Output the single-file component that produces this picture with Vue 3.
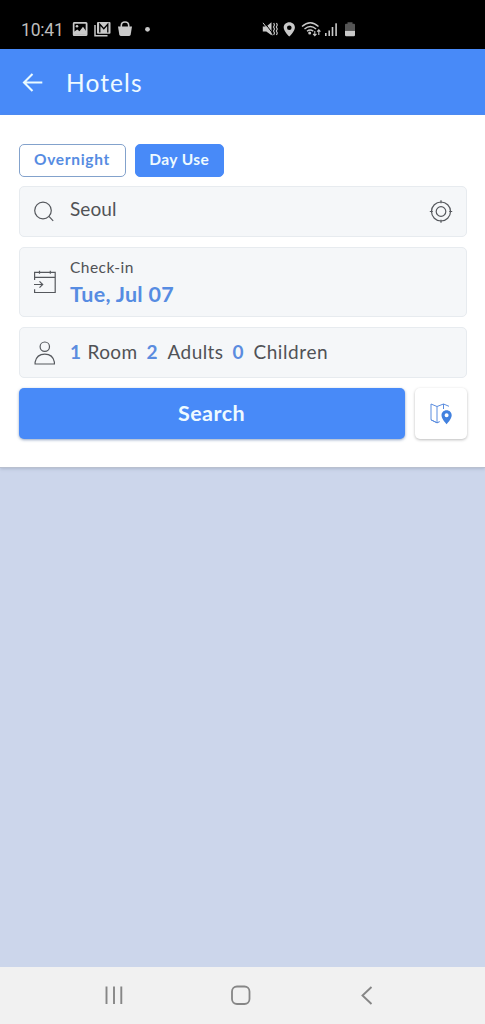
<script setup>
const guests = [
  { count: 1, label: 'Room', kind: 'room' },
  { count: 2, label: 'Adults', kind: 'adults' },
  { count: 0, label: 'Children', kind: 'children' },
]
</script>

<template>
  <div class="screen">
    <div class="status">
      <span class="clock">10:41</span>
      <svg class="notifs" width="82" height="18" viewBox="0 0 82 18">
        <path fill="#c9c9c9" fill-rule="evenodd" d="M2 2h12q1.500 0 1.500 1.500v11q0 1.500-1.500 1.500H2Q.8 16 .8 14.500v-11Q.8 2 2 2zM2.500 3.800v10.500h11.200V3.800z" />
        <path fill="#c9c9c9" d="M2 14.800v-3l3.300-2.300 2.200 1.700 3.500-4.500 3.200 4.500v3.600z" /><circle cx="5" cy="6.300" r="1.300" fill="#c9c9c9" />
        <path d="M23 5v10.800h12.500" fill="none" stroke="#c9c9c9" stroke-width="1.500" />
        <rect x="25" y="2" width="13.500" height="11.800" rx="1" fill="#c9c9c9" />
        <path d="M27.800 12.500V4.300l4 4.500 4-4.500v8.200" fill="none" stroke="#000" stroke-width="1.300" />
        <path d="M46 6.500h14l-1.300 8q-.3 1.500-2 1.500h-7.400q-1.700 0-2-1.500z" fill="#c9c9c9" />
        <path d="M49.300 7V5.200Q49.500 2 53 2t3.700 3.200V7" fill="none" stroke="#c9c9c9" stroke-width="1.600" />
        <circle cx="75.500" cy="9.300" r="2.400" fill="#c9c9c9" />
      </svg>
      <svg class="signals" width="96" height="20" viewBox="0 0 96 20">
        <g fill="#c9c9c9">
          <path d="M.8 6.500h3.500l5.200-4.300v13L4.300 11.500H.8z" />
          <path fill-rule="evenodd" d="M27.300 2.200c-3.300 0-5.600 2.300-5.600 5.400 0 3.800 5.600 9 5.600 9s5.600-5.200 5.600-9c0-3.100-2.300-5.400-5.600-5.400zm0 3.200a2.300 2.300 0 1 1 0 4.600 2.300 2.300 0 0 1 0-4.600z" />
          <circle cx="47.700" cy="13" r="1.500" />
          <rect x="63" y="13" width="1.600" height="3" /><rect x="66.400" y="10.500" width="1.600" height="5.500" /><rect x="69.700" y="7" width="1.600" height="9" /><rect x="73.300" y="3.300" width="1.600" height="12.700" />
          <path d="M83 10.500h10V15q0 1.200-1.200 1.200h-7.600Q83 16.200 83 15z" />
        </g>
        <path d="M85.500 2.200h5v1.500H92q1 0 1 1v5.800H83V4.700q0-1 1-1h1.500z" fill="#555" />
        <path d="M2 2l10 13" stroke="#000" stroke-width="1" /><path d="M1 2.800l9.500 12.500" stroke="#c9c9c9" stroke-width="1" />
        <path d="M11.700 3l.8 2-1 2 1 2-1 2 1 2-.8 2M14.500 3l.8 2-1 2 1 2-1 2 1 2-.8 2" fill="none" stroke="#c9c9c9" stroke-width="1.100" />
        <path d="M40 6.500q8.300-7.500 16.500 0M42.500 9q5.800-5 11.600 0M45 11.300q3.200-2.600 6.300 0" fill="none" stroke="#c9c9c9" stroke-width="1.400" />
        <path d="M52.800 11v4.500m-1.700-1.700l1.700 1.900 1.700-1.900M56.800 15V10m-1.600 1.700l1.600-1.900 1.600 1.900" fill="none" stroke="#c9c9c9" stroke-width="1.100" />
      </svg>
    </div>

    <header class="bar">
      <svg class="back" width="22" height="22" viewBox="0 0 22 22"><path d="M20.300 11.500H2.500M10.500 3L2 11.500l8.500 8.500" fill="none" stroke="#eafaff" stroke-width="2.100" /></svg>
      <h1>Hotels</h1>
    </header>

    <main class="panel">
      <div class="tabs">
        <button class="tab overnight"><span>Overnight</span></button>
        <button class="tab dayuse"><span>Day Use</span></button>
      </div>
      <div class="field">
        <svg class="lead" width="24" height="24" viewBox="0 0 24 24" fill="none" stroke="#55585d" stroke-width="1.200"><circle cx="10" cy="10.500" r="8.300" /><path d="M15.900 16.400l4.300 4.400" /></svg>
        <span class="text city">Seoul</span>
        <svg class="locate" width="24" height="24" viewBox="0 0 24 24" fill="none" stroke="#55585d" stroke-width="1.200"><circle cx="12" cy="11.500" r="9.500" /><circle cx="12" cy="11.500" r="4.800" /><path d="M12 .3v3M12 19.700v3M.8 11.500h3M20.200 11.500h3" /></svg>
      </div>
      <div class="field tall">
        <svg class="lead" width="24" height="24" viewBox="0 0 24 24" fill="none" stroke="#55585d" stroke-width="1.200"><path d="M1.600 10V2.300h20.600v20.200H1.600v-3.300M1.600 7.300h20.600M6.500.8v3M17.300.8v3M1 14.500h8.500M6.500 11.300l3.200 3.200-3.200 3.200" /></svg>
        <div class="dates">
          <span class="caption">Check-in</span>
          <span class="date">Tue, Jul 07</span>
        </div>
      </div>
      <div class="field">
        <svg class="lead" width="24" height="26" viewBox="0 0 24 26" fill="none" stroke="#55585d" stroke-width="1.200"><circle cx="11.800" cy="6.700" r="4.700" /><path d="M2.100 24h19.300v-1.800q-1.500-8-9.600-8t-9.700 8z" /></svg>
        <div class="guests">
          <span v-for="g in guests" :key="g.kind" class="guest" :class="g.kind"><b>{{ g.count }}</b><span>{{ g.label }}</span></span>
        </div>
      </div>
      <div class="actions">
        <button class="search"><span>Search</span></button>
        <button class="map" aria-label="Map">
          <svg width="24" height="24" viewBox="0 0 24 24"><path d="M9.300 20.300L8 20.800l-6-3V2l6 2.500L14.500 2 20 4.300M2 17.800l6 3 2.800-1.200M8 4.500v16.300M14.500 2v5" fill="none" stroke="#5b8ddf" stroke-width="1" /><path fill="#4281df" fill-rule="evenodd" d="M17.600 8.200c-3 0-5.100 2.200-5.100 5.100 0 3.800 5.100 8.900 5.100 8.900s5.100-5.100 5.100-8.900c0-2.900-2.100-5.100-5.100-5.100zm0 3.100a2 2 0 1 1 0 4 2 2 0 0 1 0-4z" /></svg>
        </button>
      </div>
    </main>
    <div class="empty"></div>
    <nav class="nav">
      <svg width="20" height="20" viewBox="0 0 20 20"><path d="M2.500 1.500V19M10 1.500V19M17.300 1.500V19" stroke="#868686" stroke-width="1.900" /></svg>
      <svg width="20" height="20" viewBox="0 0 20 20"><rect x="1" y="1.500" width="17.500" height="17.500" rx="5" fill="none" stroke="#868686" stroke-width="1.800" /></svg>
      <svg width="20" height="20" viewBox="0 0 20 20"><path d="M14.500 2L5.500 10.500l9 8.500" fill="none" stroke="#868686" stroke-width="1.900" /></svg>
    </nav>
  </div>
</template>

<style>
body { margin: 0; background: #cbd6ea; }
</style>
<style scoped>
.screen { width: 485px; height: 1024px; display: flex; flex-direction: column; overflow: hidden; background: #ccd6eb; font-family: Lato, "Open Sans", sans-serif; color: #505256; }
.screen * { box-sizing: border-box; }
svg { display: block; flex: none; }
button { font: inherit; padding: 0; cursor: pointer; }
.status { height: 49px; background: #000; display: flex; align-items: flex-start; padding: 20px 0 0 21px; flex: none; }
.clock { width: 51px; font: 17.500px/20px Roboto, sans-serif; color: #bdbdbd; letter-spacing: -.2px; }
.signals { margin-left: 108px; }
.bar { height: 66px; flex: none; background: #488af8; display: flex; align-items: center; padding-left: 22px; }
h1 { margin: 2px 0 0 22px; font-size: 24.500px; line-height: 30px; font-weight: 400; letter-spacing: 1.100px; color: #eefaff; }
.panel { height: 353px; flex: none; background: #fff; padding: 28.500px 18.500px 0; display: flex; flex-direction: column; gap: 9.900px; border-bottom: 1px solid #b9c0cf; box-shadow: 0 1px 3px #8791ab70; }
.tabs { display: flex; gap: 9px; height: 33px; }
.tab { border: 1px solid #83a2cc; border-radius: 5px; font-size: 15.500px; font-weight: 700; line-height: 20px; padding-bottom: 2px; background: #fff; color: #568ce2; }
.overnight { width: 107px; letter-spacing: .7px; }
.dayuse { width: 89.500px; background: #488af8; border-color: #488af8; color: #eefaff; letter-spacing: .4px; }
.field { height: 51px; display: flex; align-items: center; padding: 0 13px 0 13px; background: #f5f7f9; border: 1px solid #e7ebef; border-radius: 5px; }
.tall { height: 70px; }
.lead { margin-right: 13.500px; }
.city { flex: 1; font-size: 19px; line-height: 24px; padding-bottom: 5px; letter-spacing: .1px; }
.dates { display: flex; flex-direction: column; padding-top: 1px; }
.caption { font-size: 15.500px; line-height: 22px; letter-spacing: .45px; }
.date { font-size: 21.500px; line-height: 32px; font-weight: 700; letter-spacing: .3px; color: #568ce2; }
.guests { display: flex; gap: 9px; font-size: 19px; line-height: 24px; padding-bottom: 1px; letter-spacing: .4px; }
.guest { display: flex; gap: 10px; }
.guest.room { gap: 6.500px; }
.guest.children { letter-spacing: .6px; }
.guest b { color: #5b8cdf; width: 11px; }
.actions { display: flex; gap: 10px; height: 51px; }
.search { width: 386px; border: 0; border-radius: 5px; background: #488af8; color: #eefaff; font-size: 21.500px; font-weight: 700; letter-spacing: .45px; padding-bottom: 2px; box-shadow: 0 1px 3px #4c6a9b99; }
.map { flex: 1; border: 0; border-radius: 5px; background: #fff; box-shadow: 0 1px 3px #0004; display: grid; place-items: center; }
.empty { flex: 1; }
.nav { height: 57px; flex: none; background: #f1f1f1; display: flex; justify-content: space-between; padding: 18px 108px 0 104px; }
</style>
